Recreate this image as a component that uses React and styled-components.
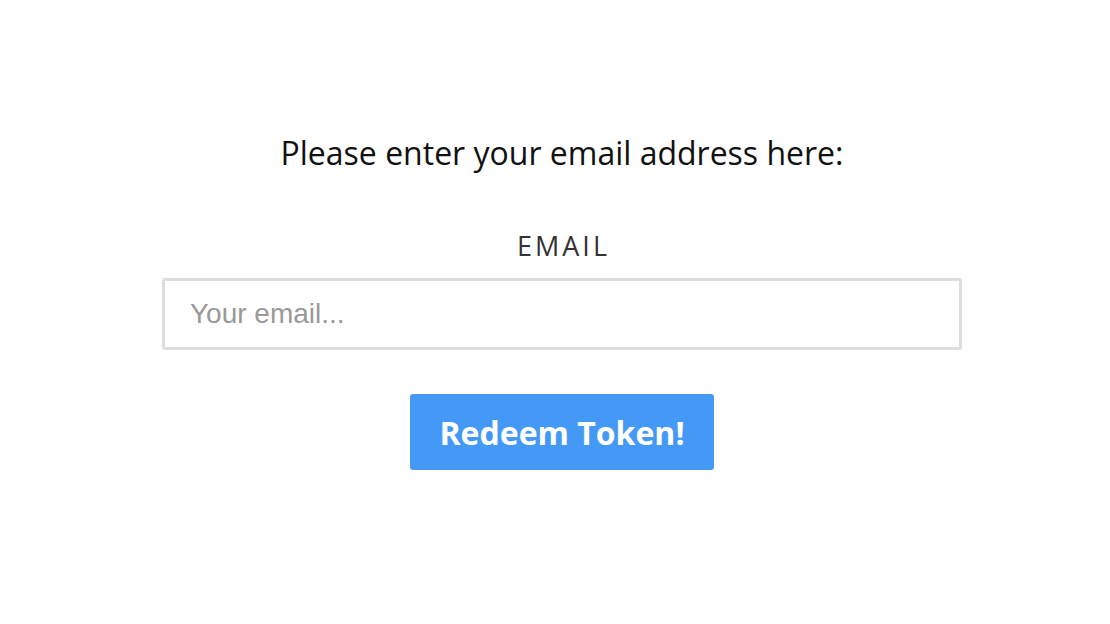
import React from 'react';
import styled, { createGlobalStyle } from 'styled-components';

const GlobalStyle = createGlobalStyle`
  body {
    margin: 0;
    background: #ffffff;
    font-family: "Open Sans", "Noto Sans", sans-serif;
  }
`;

const Page = styled.div`
  width: 1110px;
  height: 624px;
  display: flex;
  flex-direction: column;
  align-items: center;
  padding-top: 131px;
  padding-left: 14px;
  box-sizing: border-box;
`;

const Prompt = styled.p`
  margin: 0;
  font-size: 32px;
  line-height: 44px;
  color: #111;
`;

const Form = styled.form`
  display: flex;
  flex-direction: column;
  align-items: center;
  margin-top: 55px;
`;

const Label = styled.label`
  font-size: 27px;
  line-height: 32px;
  letter-spacing: 3px;
  margin-right: -3px;
  color: #333;
  text-transform: uppercase;
`;

const EmailInput = styled.input`
  margin-top: 16px;
  width: 800px;
  height: 72px;
  box-sizing: border-box;
  border: 3px solid #dedede;
  border-radius: 3px;
  padding: 0 25px;
  font-family: "Liberation Sans", Arial, sans-serif;
  font-size: 28px;
  color: #333;
  outline: none;

  &::placeholder {
    color: #999;
  }
`;

const RedeemButton = styled.button`
  margin-top: 44px;
  width: 304px;
  height: 76px;
  border: none;
  border-radius: 3px;
  background: #4499f7;
  color: #fff;
  font-family: "Open Sans", "Noto Sans", sans-serif;
  font-weight: 700;
  font-size: 32px;
  cursor: pointer;
`;

const App = () => {
  return (
    <>
      <GlobalStyle />
      <Page>
        <Prompt>Please enter your email address here:</Prompt>
        <Form onSubmit={(e) => e.preventDefault()}>
          <Label htmlFor="email">Email</Label>
          <EmailInput id="email" type="email" placeholder="Your email..." />
          <RedeemButton type="submit">Redeem Token!</RedeemButton>
        </Form>
      </Page>
    </>
  );
};

export default App;
